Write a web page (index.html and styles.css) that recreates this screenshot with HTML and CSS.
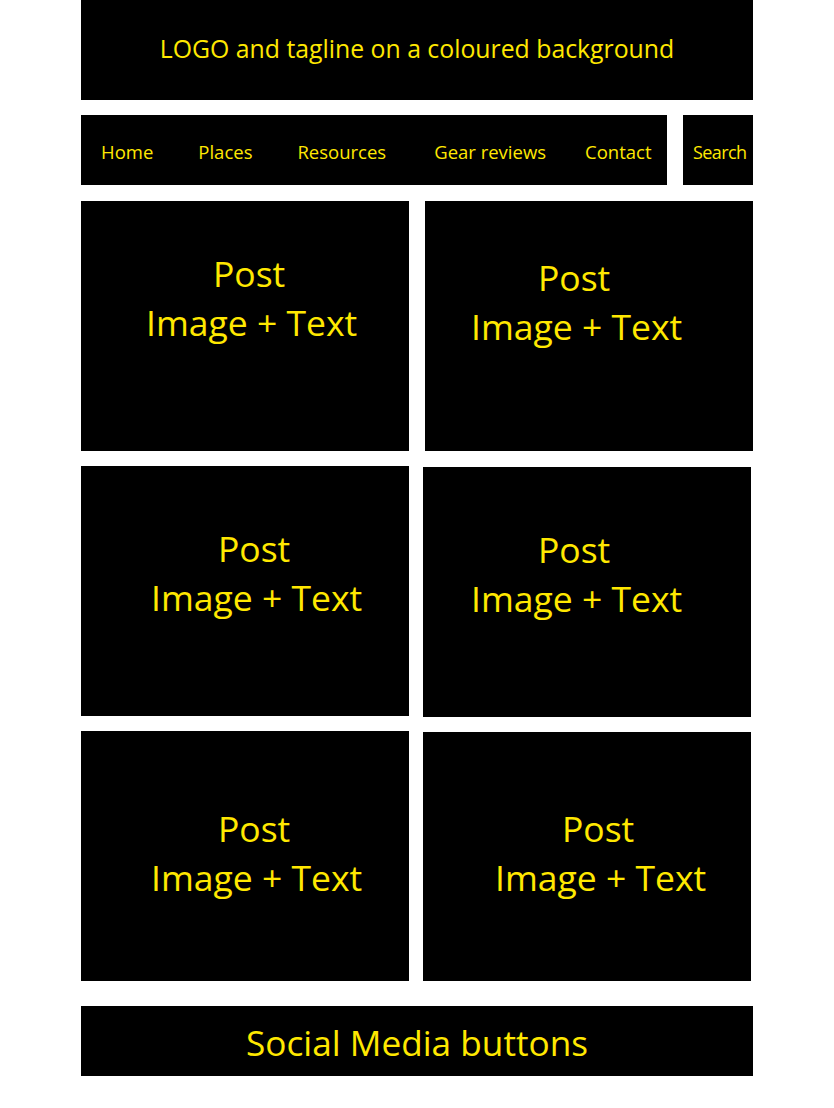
FILE: index.html
```html
<!DOCTYPE html>
<html lang="en">
<head>
<meta charset="utf-8">
<title>Wireframe</title>
<link rel="stylesheet" href="styles.css">
</head>
<body>
<div class="page">
  <header class="masthead">LOGO and tagline on a coloured background</header>

  <div class="navrow">
    <nav class="nav">
      <a class="nav-link nav-link--home">Home</a>
      <a class="nav-link nav-link--places">Places</a>
      <a class="nav-link nav-link--resources">Resources</a>
      <a class="nav-link">Gear reviews</a>
      <a class="nav-link">Contact</a>
    </nav>
    <div class="search">Search</div>
  </div>

  <main class="posts">
    <article class="card card--r1l"><div class="post-text"><span class="post-title">Post</span><span>Image + Text</span></div></article>
    <article class="card card--r1r"><div class="post-text"><span class="post-title">Post</span><span>Image + Text</span></div></article>
    <article class="card card--r2l"><div class="post-text"><span class="post-title">Post</span><span>Image + Text</span></div></article>
    <article class="card card--r2r card--nudge"><div class="post-text"><span class="post-title">Post</span><span>Image + Text</span></div></article>
    <article class="card card--r3l"><div class="post-text"><span class="post-title">Post</span><span>Image + Text</span></div></article>
    <article class="card card--r3r card--nudge card--short"><div class="post-text"><span class="post-title">Post</span><span>Image + Text</span></div></article>
  </main>

  <footer class="social">Social Media buttons</footer>
</div>
</body>
</html>
```
FILE: styles.css
```css
html, body {
  margin: 0;
  padding: 0;
  background: #ffffff;
}

body {
  font-family: "Open Sans", "Noto Sans", sans-serif;
  color: #ffe800;
}

.page {
  width: 672px;
  margin: 0 auto;
  display: flex;
  flex-direction: column;
}

.masthead {
  height: 100px;
  box-sizing: border-box;
  padding-top: 31px;
  background: #000;
  font-size: 24.8px;
  line-height: normal;
  text-align: center;
}

.navrow {
  margin-top: 15px;
  display: flex;
  gap: 16px;
  height: 70px;
}

.nav {
  width: 586px;
  box-sizing: border-box;
  background: #000;
  display: flex;
  align-items: flex-start;
  gap: 39px;
  padding: 24px 0 0 20px;
}

.nav-link {
  font-size: 18.5px;
  line-height: normal;
  color: #ffe800;
  text-decoration: none;
  white-space: nowrap;
}

.nav-link--home { margin-right: 6px; }
.nav-link--places { margin-right: 6px; }
.nav-link--resources { margin-right: 9px; }

.search {
  width: 70px;
  box-sizing: border-box;
  background: #000;
  padding: 25px 0 0 10px;
  font-size: 18px;
  letter-spacing: -0.6px;
  line-height: normal;
  white-space: nowrap;
}

.posts {
  margin-top: 16px;
  display: grid;
  grid-template-columns: 328px 328px;
  column-gap: 16px;
  row-gap: 15px;
}

.card {
  width: 328px;
  height: 250px;
  box-sizing: border-box;
  background: #000;
}

.card--nudge {
  margin-left: -2px;
  margin-top: 1px;
  margin-bottom: -1px;
}

.card--short {
  height: 249px;
  margin-bottom: 0;
}

.post-text {
  width: fit-content;
  display: flex;
  flex-direction: column;
  align-items: center;
  font-size: 35.5px;
  line-height: 49px;
  white-space: nowrap;
}

.post-title {
  padding-right: 5px;
}

.card--r1l { padding: 48px 0 0 65px; }
.card--r1r { padding: 52px 0 0 46px; }
.card--r2l { padding: 58px 0 0 70px; }
.card--r2r { padding: 58px 0 0 48px; }
.card--r3l { padding: 73px 0 0 70px; }
.card--r3r { padding: 72px 0 0 72px; }

.social {
  margin-top: 25px;
  height: 70px;
  box-sizing: border-box;
  padding-top: 12px;
  background: #000;
  font-size: 35.2px;
  line-height: normal;
  text-align: center;
  white-space: nowrap;
}
```
